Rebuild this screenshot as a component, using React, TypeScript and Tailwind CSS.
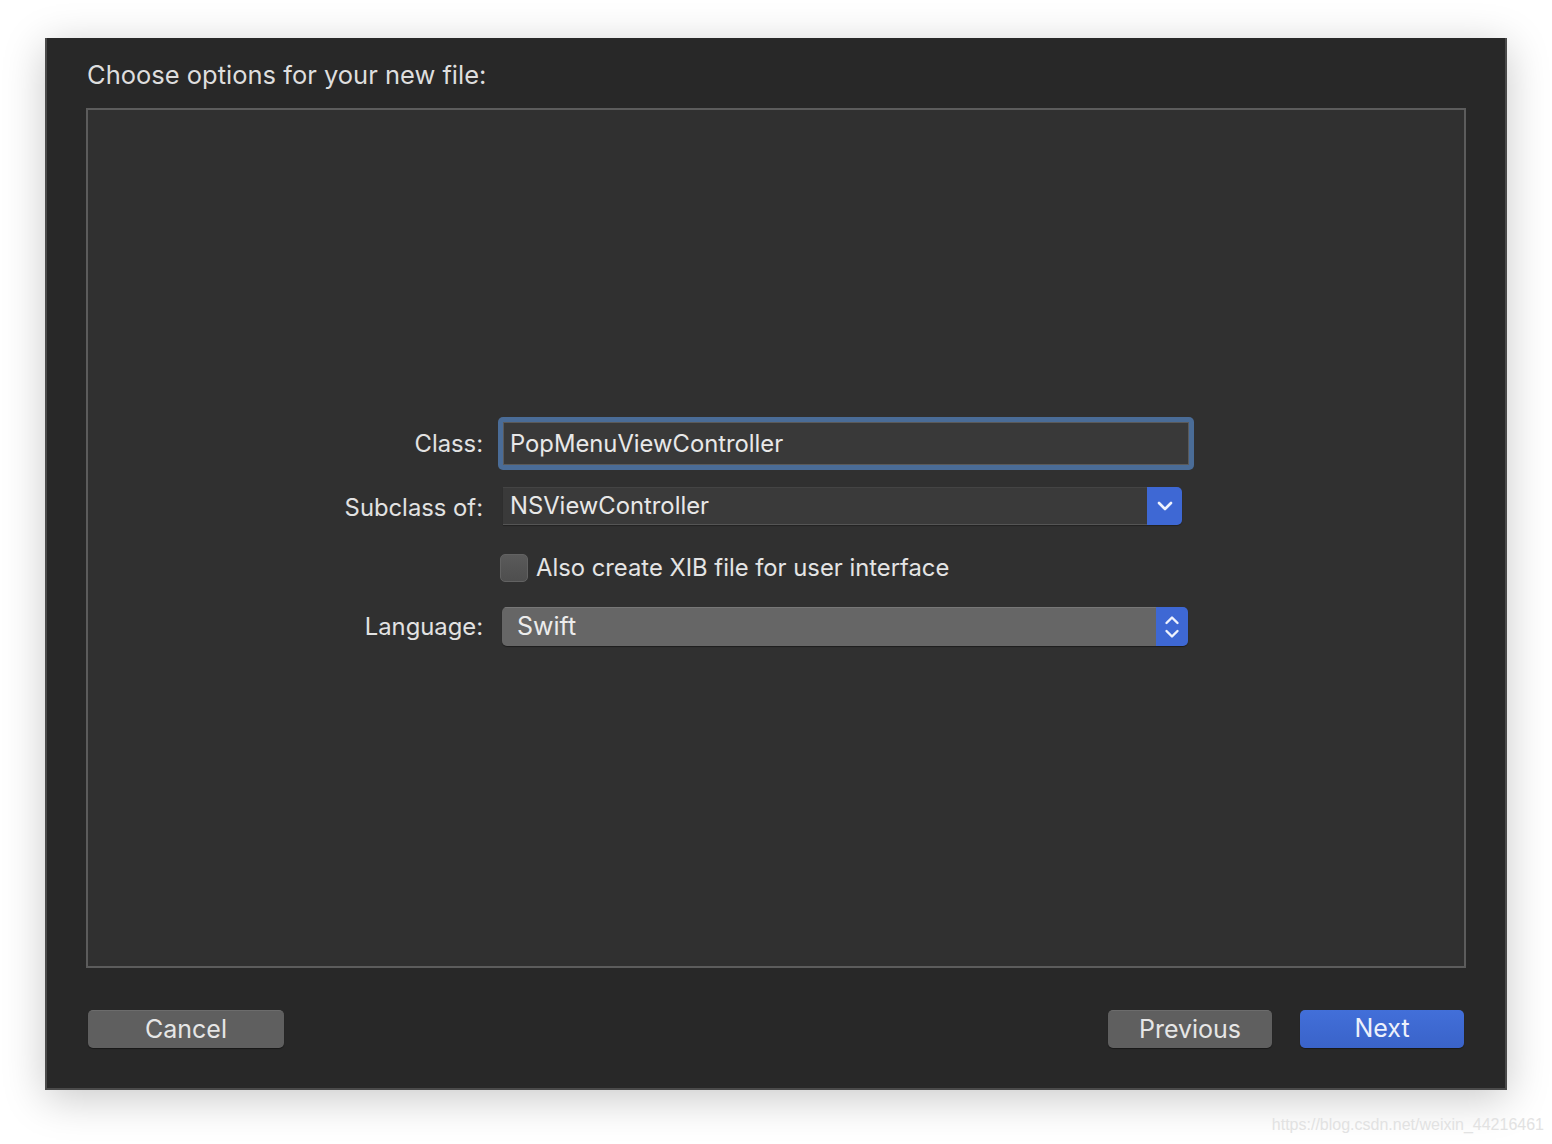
import React from "react";

const font = { fontFamily: "Inter, 'Noto Sans', sans-serif" };

function Chevron() {
  return (
    <svg width="18" height="12" viewBox="0 0 18 12">
      <path d="M3 3 L9 9 L15 3" fill="none" stroke="#eef2fd" strokeWidth="2.6" strokeLinecap="round" strokeLinejoin="round" />
    </svg>
  );
}

function Stepper() {
  return (
    <svg width="18" height="30" viewBox="0 0 18 30">
      <path d="M3.5 11 L9 5.5 L14.5 11" fill="none" stroke="#eef2fd" strokeWidth="2.4" strokeLinecap="round" strokeLinejoin="round" />
      <path d="M3.5 19 L9 24.5 L14.5 19" fill="none" stroke="#eef2fd" strokeWidth="2.4" strokeLinecap="round" strokeLinejoin="round" />
    </svg>
  );
}

export default function App() {
  return (
    <div className="w-[1552px] h-[1144px] bg-white relative overflow-hidden" style={font}>
      <div className="pt-[38px] pl-[45px]">
        <div className="w-[1462px] h-[1052px] bg-[#282828] border-x-2 border-b-2 border-[#4b4b4b] shadow-[0_8px_40px_rgba(0,0,0,0.22)] flex flex-col">
          <div className="h-[70px] pl-[40px] flex items-center text-[25.5px] text-[#dedede] pt-[5px]">
            Choose options for your new file:
          </div>
          <div className="ml-[39px] w-[1380px] h-[860px] border-2 border-[#5c5c5c] bg-[#303030] pt-[307px]">
            {/* Class row */}
            <div className="flex items-center h-[53px]">
              <div className="w-[395px] text-right text-[23.8px] text-[#e2e2e2]">Class:</div>
              <div className="ml-[15px] w-[696px] h-[53px] rounded-[5px] bg-[#4a6c97] p-[5px]">
                <div className="w-full h-full bg-[#393939] border border-[#5a5a5a] flex items-center pl-[6px] text-[23.8px] text-[#e8e8e8]">
                  PopMenuViewController
                </div>
              </div>
            </div>
            {/* Subclass row */}
            <div className="flex items-center h-[38px] mt-[17px]">
              <div className="w-[395px] text-right text-[23.8px] text-[#e2e2e2] pt-[3px]">Subclass of:</div>
              <div className="ml-[20px] w-[679px] h-[38px] flex rounded-r-[5px] shadow-[0_1px_1px_rgba(0,0,0,0.3)]">
                <div className="flex-1 bg-[#3a3a3a] border-t border-[#444] border-b border-b-[#555] flex items-center pl-[7px] text-[23.8px] text-[#e8e8e8]">
                  NSViewController
                </div>
                <div className="w-[35px] bg-[#3e68d4] rounded-r-[5px] flex items-center justify-center">
                  <Chevron />
                </div>
              </div>
            </div>
            {/* Checkbox row */}
            <div className="flex items-center h-[28px] mt-[29px]">
              <div className="w-[410px]" />
              <div className="ml-[2px] w-[28px] h-[28px] rounded-[5px] bg-gradient-to-b from-[#5a5a5a] to-[#4e4e4e] border border-[#626262]" />
              <div className="ml-[8px] text-[23.8px] text-[#e4e4e4]">Also create XIB file for user interface</div>
            </div>
            {/* Language row */}
            <div className="flex items-center h-[39px] mt-[25px]">
              <div className="w-[395px] text-right text-[23.8px] text-[#e2e2e2]">Language:</div>
              <div className="ml-[19px] w-[686px] h-[39px] flex rounded-[5px] overflow-hidden shadow-[0_1px_1px_rgba(0,0,0,0.4)]">
                <div className="flex-1 bg-[#666666] border-t border-[#777] flex items-center pl-[15px] text-[25px] text-[#ececec]">
                  Swift
                </div>
                <div className="w-[32px] bg-[#3e68d4] flex items-center justify-center">
                  <Stepper />
                </div>
              </div>
            </div>
          </div>
          <div className="flex-1 flex items-center px-[41px] pt-[2px]">
            <button className="w-[196px] h-[38px] rounded-[5px] bg-[#5f5f5f] border-t border-[#6c6c6c] text-[25px] text-[#e6e6e6] flex items-center justify-center shadow-[0_1px_1px_rgba(0,0,0,0.4)]">
              Cancel
            </button>
            <div className="flex-1" />
            <button className="w-[164px] h-[38px] rounded-[5px] bg-[#5f5f5f] border-t border-[#6c6c6c] text-[25px] text-[#e6e6e6] flex items-center justify-center shadow-[0_1px_1px_rgba(0,0,0,0.4)]">
              Previous
            </button>
            <button className="ml-[28px] w-[164px] h-[38px] rounded-[5px] bg-gradient-to-b from-[#426fd9] to-[#3a63c9] text-[25px] text-[#edf1fb] flex items-center justify-center shadow-[0_1px_1px_rgba(0,0,0,0.4)]">
              Next
            </button>
          </div>
        </div>
      </div>
      <div className="flex justify-end pr-[8px] pt-[23px]">
        <span className="text-[16px] text-[#e2e2e2]" style={{ fontFamily: "'Liberation Sans', Arial, sans-serif" }}>
          https://blog.csdn.net/weixin_44216461
        </span>
      </div>
    </div>
  );
}
